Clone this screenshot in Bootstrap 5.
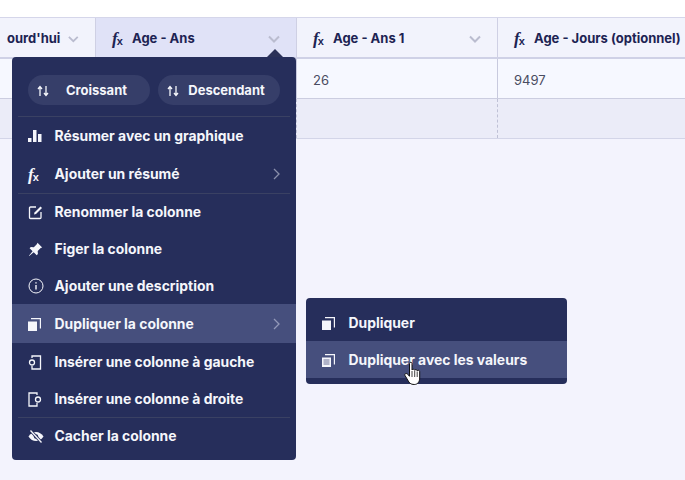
<!DOCTYPE html>
<html lang="fr">
<head>
<meta charset="utf-8">
<title>Colonne</title>
<link href="https://cdn.jsdelivr.net/npm/bootstrap@5.3.0/dist/css/bootstrap.min.css" rel="stylesheet">
<style>
html,body{height:100%;}
body{background:#fff;font-family:"Inter","Liberation Sans",sans-serif;overflow:hidden;}
.stage{position:relative;width:685px;height:480px;overflow:hidden;background:#f3f3fd;}
.top-strip{height:17px;background:#fff;}
.grid-row{display:flex;width:1000px;margin-left:-105px;}
.cell{width:201px;flex:none;border-right:1px solid #cfd0e4;}
.head{height:42px;border-top:1px solid #d5d6ea;border-bottom:2px solid #cfd1e6;background:#f2f3fc;}
.head .cell{height:39px;padding:2px 16px 0;color:#1d2353;font-weight:650;font-size:13px;}
.head .cell.active{background:#e0e2f7;}
.fx{font-family:"Liberation Serif",serif;font-style:italic;font-weight:700;font-size:17px;width:20px;flex:none;line-height:1;}
.fx sub{font-style:normal;font-family:"Liberation Sans",sans-serif;font-size:11px;bottom:-.1em;margin-left:-1px;}
.data{height:40px;background:#f6f8ff;border-bottom:1px solid #cbcde0;color:#494c61;font-size:13px;}
.data .cell{height:39px;padding:4px 16px 0;border-right-color:#c8cade;}
.empty{height:40px;background:#ebecf8;border-bottom:1px solid #d3d5e8;}
.empty .cell{height:39px;border-right:1px dashed #bfc1d6;}
.menu-box{position:absolute;background:#262e5b;border-radius:4px;color:#f5f6fb;font-weight:650;font-size:13.9px;}
.main-menu{left:12px;top:57px;width:284px;height:403px;padding:18px 0 0;}
.main-menu::before{content:"";position:absolute;top:-8px;left:255px;border:8px solid transparent;border-top:0;border-bottom-color:#2b3158;}
.sub-menu{left:306px;top:298px;width:261px;height:86px;padding-top:6px;}
.sub-menu .entry{padding-top:1px;}
.pill-row{display:flex;gap:8px;padding:0 16px;height:30px;}
.pill-btn{width:122px;height:30px;background:#363e69;border-radius:15px;display:flex;align-items:center;padding:1px 0 0 9px;color:#f5f6fb;font-size:13px;}
.pill-btn span{flex:1;text-align:center;padding-right:6px;}
.rule{height:1px;background:#3a4163;margin:11px 6px 0;}
.entry{height:38px;display:flex;align-items:center;padding:0 16px;position:relative;}
.entry.h37{height:37px;}
.entry.h36{height:36px;}
.entry.h39{height:39px;padding-top:1px;}
.entry .ic{width:26.500px;flex:none;display:flex;align-items:center;}
.entry.on{background:#464f7d;}
.entry.split::before{content:"";position:absolute;left:6px;right:6px;top:0;height:1px;background:#3a4163;}
.entry .fx{width:26.500px;color:#f5f6fb;}
.caret{margin-left:auto;}
.hand{position:absolute;left:404px;top:361px;}
</style>
</head>
<body>
<div class="stage">
  <div class="top-strip"></div>
  <div class="head grid-row">
    <div class="cell d-flex align-items-center">
      <span class="flex-grow-1 text-end pe-2 text-nowrap" style="padding-left:96px">ourd'hui</span>
      <svg width="12" height="8" viewBox="0 0 12 8"><path d="M1 1.500l5 5 5-5" fill="none" stroke="#babccf" stroke-width="2"/></svg>
    </div>
    <div class="cell active d-flex align-items-center">
      <span class="fx">f<sub>x</sub></span><span class="flex-grow-1">Age - Ans</span>
      <svg width="12" height="8" viewBox="0 0 12 8"><path d="M1 1.500l5 5 5-5" fill="none" stroke="#babccf" stroke-width="2"/></svg>
    </div>
    <div class="cell d-flex align-items-center">
      <span class="fx">f<sub>x</sub></span><span class="flex-grow-1">Age - Ans 1</span>
      <svg width="12" height="8" viewBox="0 0 12 8"><path d="M1 1.500l5 5 5-5" fill="none" stroke="#babccf" stroke-width="2"/></svg>
    </div>
    <div class="cell d-flex align-items-center">
      <span class="fx">f<sub>x</sub></span><span class="text-nowrap">Age - Jours (optionnel)</span>
    </div>
  </div>
  <div class="data grid-row">
    <div class="cell"></div><div class="cell"></div>
    <div class="cell d-flex align-items-center">26</div>
    <div class="cell d-flex align-items-center">9497</div>
  </div>
  <div class="empty grid-row">
    <div class="cell"></div><div class="cell"></div><div class="cell"></div><div class="cell"></div>
  </div>

  <div class="menu-box main-menu">
    <div class="pill-row">
      <div class="pill-btn"><svg width="12" height="12" viewBox="0 0 12 12"><path d="M3 11V2M1 4l2-2.500L5 4M9 1v9M7 8l2 2.500L11 8" fill="none" stroke="#f5f6fb" stroke-width="1.300"/></svg><span>Croissant</span></div>
      <div class="pill-btn"><svg width="12" height="12" viewBox="0 0 12 12"><path d="M3 11V2M1 4l2-2.500L5 4M9 1v9M7 8l2 2.500L11 8" fill="none" stroke="#f5f6fb" stroke-width="1.300"/></svg><span>Descendant</span></div>
    </div>
    <div class="rule"></div>
    <div class="entry"><span class="ic"><svg width="14" height="14" viewBox="0 0 14 14" fill="#f5f6fb"><rect x="0" y="9" width="3.500" height="4"/><rect x="5" y="1" width="3.500" height="12"/><rect x="10" y="5" width="3.500" height="8"/></svg></span>Résumer avec un graphique</div>
    <div class="entry"><span class="fx">f<sub>x</sub></span>Ajouter un résumé<svg class="caret" width="7" height="12" viewBox="0 0 7 12"><path d="M1 1l5 5-5 5" fill="none" stroke="#8a8fab" stroke-width="1.300"/></svg></div>
    <div class="entry split"><span class="ic"><svg width="15" height="15" viewBox="0 0 15 15" fill="none" stroke="#f5f6fb" stroke-width="1.300"><path d="M8 2H2.500a1 1 0 0 0-1 1v9.500a1 1 0 0 0 1 1H12a1 1 0 0 0 1-1V7"/><path d="M6 9.500l.5-2L12.500 1.500l1.500 1.500-6 6z" fill="#f5f6fb" stroke="none"/></svg></span>Renommer la colonne</div>
    <div class="entry h37"><span class="ic"><svg width="15" height="15" viewBox="0 0 15 15" fill="#f5f6fb"><path d="M9.500.8l4.700 4.700-1.500.6-3 3 .2 3-1.200 1.200-3-3L1.200 14 .9 13.700l3.700-4.500-3-3L2.800 5l3 .2 3-3z"/></svg></span>Figer la colonne</div>
    <div class="entry h36"><span class="ic"><svg width="16" height="16" viewBox="0 0 16 16" fill="none" stroke="#f5f6fb" stroke-width="1"><circle cx="8" cy="8" r="7"/><path d="M8 7v4.500M8 4.200v1.300" stroke-width="1.400"/></svg></span>Ajouter une description</div>
    <div class="entry h39 on"><span class="ic"><svg width="13" height="13" viewBox="0 0 13 13" fill="#f5f6fb"><path d="M0 3.500h9V13H0z"/><path d="M3 0h10v10.500h-1.200V1.200H3z"/></svg></span>Dupliquer la colonne<svg class="caret" width="7" height="12" viewBox="0 0 7 12"><path d="M1 1l5 5-5 5" fill="none" stroke="#9298b8" stroke-width="1.300"/></svg></div>
    <div class="entry"><span class="ic"><svg width="14" height="15" viewBox="0 0 14 15" fill="none" stroke="#f5f6fb" stroke-width="1.300"><path d="M4 3V1h8.500v13H4v-3"/><circle cx="4" cy="7.500" r="2.500"/></svg></span>Insérer une colonne à gauche</div>
    <div class="entry h36"><span class="ic"><svg width="14" height="15" viewBox="0 0 14 15" fill="none" stroke="#f5f6fb" stroke-width="1.300"><path d="M9 3V1H1v13h8v-3"/><circle cx="10" cy="7.500" r="2.500"/></svg></span>Insérer une colonne à droite</div>
    <div class="entry split"><span class="ic"><svg width="16" height="13" viewBox="0 0 16 13"><path d="M.5 6.500C2.500 3.500 5 2 8 2s5.500 1.500 7.500 4.500C13.500 9.500 11 11 8 11S2.500 9.500.5 6.500z" fill="#f5f6fb"/><circle cx="8" cy="6.500" r="2.200" fill="#262e5b"/><path d="M2.500.5l11 12" stroke="#262e5b" stroke-width="3"/><path d="M2.500.5l11 12" stroke="#f5f6fb" stroke-width="1.300"/></svg></span>Cacher la colonne</div>
  </div>

  <div class="menu-box sub-menu">
    <div class="entry h37"><span class="ic"><svg width="13" height="13" viewBox="0 0 13 13" fill="#f5f6fb"><path d="M0 3.500h9V13H0z"/><path d="M3 0h10v10.500h-1.200V1.200H3z"/></svg></span>Dupliquer</div>
    <div class="entry h37 on"><span class="ic"><svg width="13" height="13" viewBox="0 0 13 13" fill="#f5f6fb"><path d="M0 3.500h9V13H0z"/><path d="M3 0h10v10.500h-1.200V1.200H3z"/><path d="M1.500 6h6M1.500 8h6M1.500 10h6" stroke="#464f7d" stroke-width=".8"/></svg></span>Dupliquer avec les valeurs</div>
  </div>

  <svg class="hand" width="18" height="25" viewBox="0 0 18 25"><path d="M5.500 2.500c0-1.600 2.500-1.600 2.500 0V9c.5-1 2.500-1 2.700.3.500-1 2.400-.8 2.500.4.600-.8 2.500-.5 2.500 1V17c0 3-1.500 6.500-5.500 6.500-3.500 0-5-1.500-6.500-4.500L1 14.500c-.8-1.500 1-2.800 2.300-1.500l2.200 2.200z" fill="#fff" stroke="#111" stroke-width="1"/><path d="M8 10v6M10.700 10v6M13.200 10.500V16" stroke="#111" stroke-width=".8"/></svg>
</div>
<script src="https://cdn.jsdelivr.net/npm/bootstrap@5.3.0/dist/js/bootstrap.bundle.min.js"></script>
</body>
</html>
